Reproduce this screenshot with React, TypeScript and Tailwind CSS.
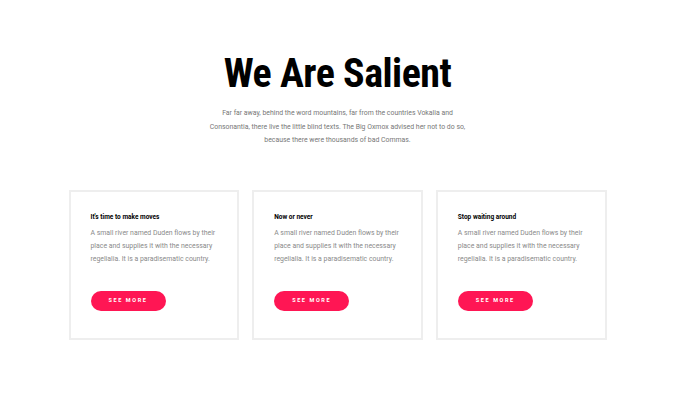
import React from "react";

const cards = [
  "It's time to make moves",
  "Now or never",
  "Stop waiting around",
];

export default function App() {
  return (
    <div className="w-[675px] h-[404px] bg-white" style={{ fontFamily: "Roboto, 'Liberation Sans', sans-serif" }}>
      <div className="pt-[52px] flex flex-col items-center">
        <h1 className="text-[40px] leading-[44px] font-bold text-black font-stretch-condensed tracking-[-0.5px]" style={{ fontFamily: "Roboto, sans-serif" }}>
          We Are Salient
        </h1>
        <p className="mt-[11px] text-center text-[6.9px] leading-[13.5px] text-[#777]">
          Far far away, behind the word mountains, far from the countries Vokalia and
          <br />
          Consonantia, there live the little blind texts. The Big Oxmox advised her not to do so,
          <br />
          because there were thousands of bad Commas.
        </p>
      </div>
      <div className="mt-[42px] mx-auto w-[538px] grid grid-cols-3 gap-[13px]">
        {cards.map((t) => (
          <div key={t} className="h-[150px] border-2 border-[#eeeeee] pl-[20px] pt-[20px]">
            <div className="text-[6.5px] font-bold text-black leading-[10px]">{t}</div>
            <p className="mt-[5px] text-[6.9px] leading-[13px] text-[#8a8a8a]">
              A small river named Duden flows by their
              <br />
              place and supplies it with the necessary
              <br />
              regelialia. It is a paradisematic country.
            </p>
            <button className="mt-[25px] w-[75px] h-[20px] rounded-full bg-[#ff1654] text-white text-[5.5px] font-bold tracking-[1.6px] flex items-center justify-center">
              SEE MORE
            </button>
          </div>
        ))}
      </div>
    </div>
  );
}
